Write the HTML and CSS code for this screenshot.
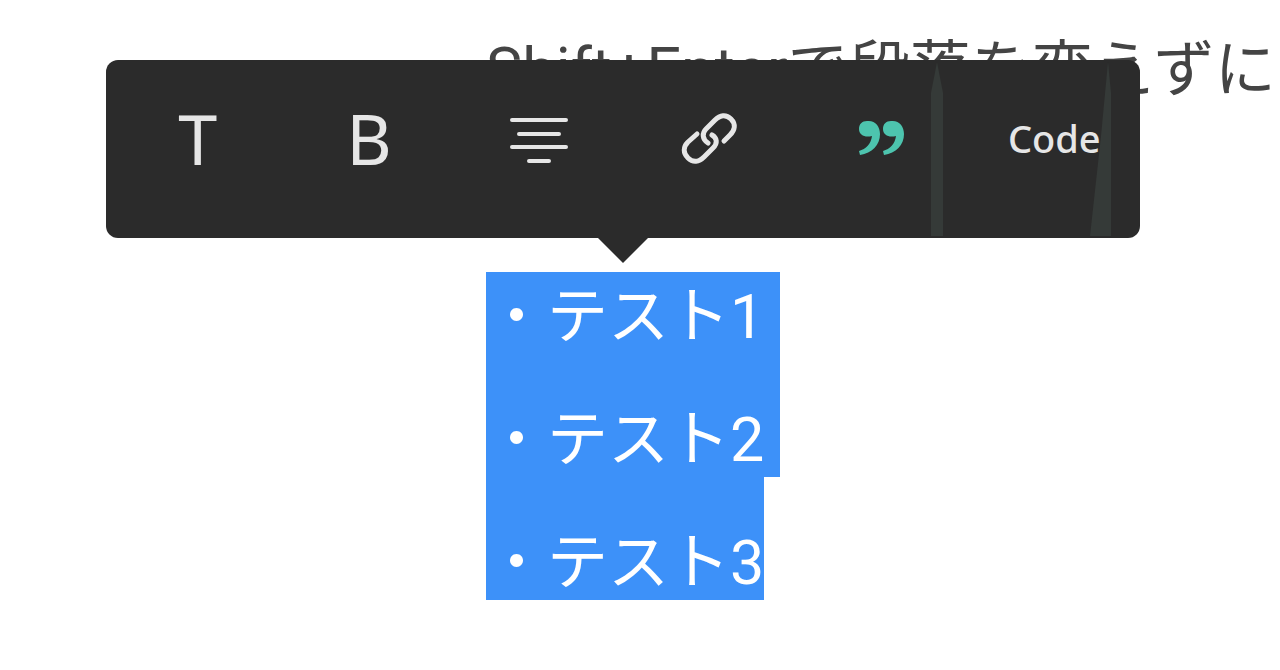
FILE: index.html
```
<!DOCTYPE html>
<html lang="ja">
<head>
  <meta charset="UTF-8">
  <meta name="viewport" content="width=device-width, initial-scale=1.0">
  <title>エディタ</title>
  <link rel="stylesheet" href="styles.css">
</head>
<body>
  <main class="editor">
    <p class="line">Shift+Enterで段落を変えずに</p>
    <div class="selection">
      <p class="row first">・テスト1</p>
      <p class="row">・テスト2</p>
      <p class="row last">・テスト3</p>
    </div>
    <div class="toolbar">
      <button class="tool letter" type="button">T</button>
      <button class="tool letter" type="button">B</button>
      <button class="tool" type="button" aria-label="中央揃え">
        <svg width="60" height="52" viewBox="0 0 60 52" fill="none" stroke="#e6e6e6" stroke-width="4" stroke-linecap="round">
          <path d="M2 8H56M9 22H49M2 35H56M19 49H39"/>
        </svg>
      </button>
      <button class="tool" type="button" aria-label="リンク">
        <svg width="60" height="52" viewBox="3 0 60 52" fill="none" stroke="#e6e6e6" stroke-width="5" stroke-linecap="round" stroke-linejoin="round" overflow="visible">
          <path d="M29 31C23 27 23 21 27 17L36 8C41 3 47 2 52 7C57 12 56 18 51 23L45 29"/>
          <path d="M33 23C38 26 39 31 34 36L25 45C20 50 14 51 9 46C4 41 4 35 9 30L18 22"/>
        </svg>
      </button>
      <button class="tool" type="button" aria-label="引用">
        <svg width="46" height="36" viewBox="2 0 46 36" fill="#4dc4ae" overflow="visible">
          <path d="M9 1C17 0 22 6 22 14C22 25 14 33 2 35L1 31C8 29 13 24 14 16C7 18 1 15 1 9C1 4 4 1 9 1Z"/>
          <path d="M33 1C41 0 46 6 46 14C46 25 38 33 26 35L25 31C32 29 37 24 38 16C31 18 25 15 25 9C25 4 28 1 33 1Z"/>
        </svg>
      </button>
      <button class="tool code" type="button">Code</button>
      <svg class="streaks" width="182" height="174" viewBox="0 0 182 174" fill="#353a38">
        <path d="M7 0L13 31V174H1V31Z"/>
        <path d="M178 0L181 31V174H160L171 74Z"/>
      </svg>
    </div>
  </main>
</body>
</html>
```
FILE: styles.css
```
body {
  margin: 0;
  background-color: #fff;
  color: #444;
}

.editor {
  position: relative;
  padding: 9px 0 69px 486px;
  font-family: Roboto, "Noto Sans CJK JP", sans-serif;
  font-size: 61px;
}

.line {
  margin: 0 0 140px;
  line-height: 123px;
  white-space: nowrap;
}

.selection {
  display: flex;
  flex-direction: column;
  align-items: flex-start;
  color: #fff;
}

.row {
  margin: 0;
  padding: 49px 16px 0 0;
  background-color: #3d91f9;
  line-height: 74px;
  white-space: nowrap;
}

.row.first {
  padding-top: 8px;
}

.row.last {
  padding-right: 0;
}

.toolbar {
  position: absolute;
  top: 60px;
  left: 106px;
  right: 140px;
  display: flex;
  box-sizing: border-box;
  height: 178px;
  padding: 0 0 22px 6px;
  border-radius: 12px;
  background-color: #2b2b2b;
}

.toolbar::after {
  content: "";
  position: absolute;
  top: 100%;
  left: 50%;
  margin-left: -25px;
  border: 25px solid transparent;
  border-top-color: #2b2b2b;
  border-bottom: 0;
}

.tool {
  display: flex;
  flex: 1;
  align-items: center;
  justify-content: center;
  padding: 0;
  border: 0;
  background: none;
  color: #e6e6e6;
  font-family: "Noto Sans", sans-serif;
  cursor: pointer;
}

.letter {
  font-size: 70px;
}

.code {
  font-size: 38px;
  font-weight: 500;
}

.streaks {
  position: absolute;
  right: 28px;
  bottom: 2px;
  pointer-events: none;
}
```
